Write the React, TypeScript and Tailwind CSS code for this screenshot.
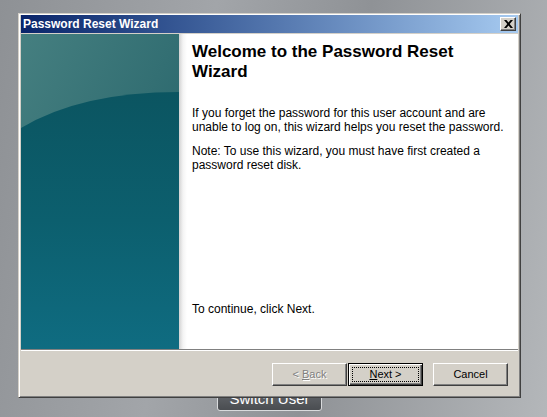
export default function App() {
  return (
    <div className="relative w-[547px] h-[417px] overflow-hidden bg-[linear-gradient(100deg,#8e9195_0%,#a2a5a9_35%,#8f9296_60%,#b4b7ba_100%)] pl-[18px] pt-[13px] font-['Liberation_Sans',Arial,sans-serif]">
      {/* logon screen button peeking out under the dialog */}
      <div className="absolute left-[217px] top-[386px] w-[105px] h-[25px] rounded-[3px] border border-[#d9dbdd] bg-gradient-to-b from-[#6a6d72] to-[#4a4d51] flex items-center justify-center pt-[2px] text-[15px] text-white">
        Switch User
      </div>

      <div className="relative z-10 w-[503px] h-[385px] flex flex-col bg-[#d4d0c8] border border-t-[#d4d0c8] border-l-[#d4d0c8] border-r-[#404040] border-b-[#404040] shadow-[inset_1px_1px_#fff,inset_-1px_-1px_#808080] pt-[1px] pl-[2px] pr-[2px] pb-[2px]">
        {/* Title bar */}
        <div className="h-[18px] flex items-center justify-between pl-[2px] pr-[2px] bg-gradient-to-r from-[#0a246a] to-[#a6caf0]">
          <span className="text-[12px] font-bold text-white leading-none">Password Reset Wizard</span>
          <button className="w-[16px] h-[14px] flex items-center justify-center bg-[#d4d0c8] border border-t-white border-l-white border-r-[#404040] border-b-[#404040] shadow-[inset_-1px_-1px_#808080]">
            <svg width="9" height="8" viewBox="0 0 9 8">
              <path d="M0 0h2.4l2.1 2.6L6.6 0H9L5.7 4 9 8H6.6L4.5 5.4 2.4 8H0l3.3-4z" fill="#000" />
            </svg>
          </button>
        </div>

        <div className="h-[1px]" />

        {/* Body */}
        <div className="h-[315px] flex">
          <div className="w-[158px] h-full">
            <svg width="158" height="315" viewBox="0 0 158 315">
              <defs>
                <linearGradient id="sky" x1="0" y1="0" x2="1" y2="1">
                  <stop offset="0" stopColor="#457f80" />
                  <stop offset="0.5" stopColor="#336f73" />
                  <stop offset="1" stopColor="#1d5d66" />
                </linearGradient>
                <linearGradient id="sea" x1="0" y1="0" x2="0" y2="1">
                  <stop offset="0" stopColor="#0b5561" />
                  <stop offset="0.5" stopColor="#0c5f6e" />
                  <stop offset="1" stopColor="#0f6c81" />
                </linearGradient>
              </defs>
              <rect width="158" height="315" fill="url(#sky)" />
              <path d="M0 94 Q60 58 158 58 L158 315 L0 315 Z" fill="url(#sea)" />
            </svg>
          </div>
          <div className="flex-1 flex flex-col bg-[linear-gradient(to_right,#d2d2d2,#f4f4f4_4px,#fff_8px)] pl-[13px] pr-[10px] pt-[8px] pb-[33px] text-black">
            <h1 className="text-[17px] leading-[20px] font-bold">
              Welcome to the Password Reset<br />Wizard
            </h1>
            <p className="mt-[24px] text-[12px] leading-[14px]">
              If you forget the password for this user account and are<br />
              unable to log on, this wizard helps you reset the password.
            </p>
            <p className="mt-[10px] text-[12px] leading-[14px]">
              Note: To use this wizard, you must have first created a<br />
              password reset disk.
            </p>
            <p className="mt-auto text-[12px] leading-[14px]">To continue, click Next.</p>
          </div>
        </div>

        {/* Separator */}
        <div className="h-[2px] border-t border-t-[#808080] border-b border-b-white" />

        {/* Buttons */}
        <div className="h-[44px] flex items-start justify-end pt-[12px] pr-[10px] text-[11px]">
          <button className="w-[75px] h-[23px] flex items-center justify-center bg-[#d4d0c8] border border-t-white border-l-white border-r-[#404040] border-b-[#404040] shadow-[inset_-1px_-1px_#808080] text-[#808080] [text-shadow:1px_1px_#fff]">
            &lt; <span className="underline ml-[3px]">B</span>ack
          </button>
          <button className="relative ml-[1px] w-[75px] h-[23px] flex items-center justify-center bg-[#d4d0c8] border border-black shadow-[inset_1px_1px_#fff,inset_-1px_-1px_#404040,inset_-2px_-2px_#808080] text-black">
            <span className="absolute inset-[3px] border border-dotted border-black" />
            <span className="underline">N</span>ext &gt;
          </button>
          <button className="ml-[10px] w-[75px] h-[23px] flex items-center justify-center bg-[#d4d0c8] border border-t-white border-l-white border-r-[#404040] border-b-[#404040] shadow-[inset_-1px_-1px_#808080] text-black">
            Cancel
          </button>
        </div>
      </div>
    </div>
  );
}
